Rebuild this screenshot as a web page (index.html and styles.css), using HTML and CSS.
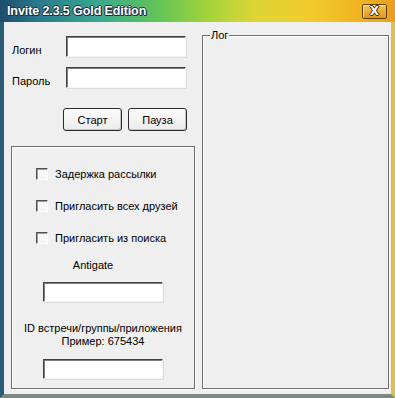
FILE: index.html
```html
<!DOCTYPE html>
<html lang="ru">
<head>
  <meta charset="UTF-8">
  <title>Invite 2.3.5 Gold Edition</title>
  <link rel="stylesheet" href="styles.css">
</head>
<body>

<div class="window">
  <div class="titlebar">
    <span class="title">Invite 2.3.5 Gold Edition</span>
    <button class="close">X</button>
  </div>

  <div class="client">
    <div class="left">
      <div class="field-row first">
        <label>Логин</label>
        <input type="text" class="edit">
      </div>
      <div class="field-row">
        <label>Пароль</label>
        <input type="password" class="edit">
      </div>

      <div class="buttons">
        <button class="btn">Старт</button>
        <button class="btn">Пауза</button>
      </div>

      <div class="group options">
        <div class="check-row"><span class="checkbox"></span>Задержка рассылки</div>
        <div class="check-row"><span class="checkbox"></span>Пригласить всех друзей</div>
        <div class="check-row"><span class="checkbox"></span>Пригласить из поиска</div>

        <div class="caption antigate">Antigate</div>
        <input type="text" class="edit small">

        <div class="caption meeting">ID встречи/группы/приложения<br>Пример: 675434</div>
        <input type="text" class="edit small">
      </div>
    </div>

    <div class="group log">
      <span class="legend">Лог</span>
    </div>
  </div>
</div>

</body>
</html>
```

FILE: styles.css
```css
body {
  margin: 0;
  font-family: 'Liberation Sans', Arial, sans-serif;
  font-size: 11px;
  color: #000;
  background: #fff;
}
.window {
  width: 395px;
  height: 398px;
  display: flex;
  flex-direction: column;
}

/* Title bar */
.titlebar {
  height: 22px;
  display: flex;
  align-items: center;
  justify-content: space-between;
  padding: 0 8px 0 7px;
  background: linear-gradient(90deg, #1d4d6e 0%, #2a7a8c 10%, #3aa98e 25%, #62c458 40%, #9fd33a 52%, #dcd536 64%, #f1cc2c 78%, #f0b222 92%, #eb9e1c 100%);
}
.title {
  color: #fff;
  font-weight: bold;
  font-size: 12.5px;
  letter-spacing: -0.1px;
  text-shadow: 1px 0 #16324a, -1px 0 #16324a, 0 1px #16324a, 0 -1px #16324a, 1px 1px #16324a;
}
.close {
  width: 25px;
  height: 15px;
  padding: 0;
  border: 1px solid #5e400e;
  border-radius: 2px;
  background: linear-gradient(#f6c25a, #e2961c);
  box-shadow: inset 1px 1px #fbe3a6;
  color: #fff;
  font-family: 'DejaVu Sans', sans-serif;
  font-weight: bold;
  font-size: 12px;
  line-height: 13px;
  text-shadow: 1px 0 #3a2a0a, -1px 0 #3a2a0a, 0 1px #3a2a0a, 0 -1px #3a2a0a;
}

/* Client area */
.client {
  flex: 1;
  display: flex;
  background: #efefef;
  border-left: 4px solid #2a5c76;
  border-right: 4px solid #e2bd48;
  border-bottom: 4px solid #7d8a84;
}
.left {
  width: 194px;
}

.edit {
  box-sizing: border-box;
  width: 120px;
  height: 21px;
  margin: 0;
  background: #fff;
  border: 1px solid;
  border-color: #404040 #f4f4f4 #f4f4f4 #404040;
  box-shadow: inset 1px 1px #808080, 1px 1px #dcdcdc;
}
.field-row {
  display: flex;
  align-items: center;
  margin-top: 10px;
  padding-left: 8px;
}
.field-row.first {
  margin-top: 14px;
}
.field-row label {
  width: 54px;
  padding-top: 7px;
}

.buttons {
  display: flex;
  gap: 6px;
  margin-top: 20px;
  padding-left: 59px;
}
.btn {
  width: 59px;
  height: 23px;
  padding: 0;
  font: inherit;
  border: 1px solid #2a2a2a;
  border-radius: 3px;
  background: linear-gradient(#fbfbfb, #ececec);
  box-shadow: inset -1px -1px #c4c4c4;
}

/* Group boxes */
.group {
  box-sizing: border-box;
  border: 1px solid #6e6e6e;
  box-shadow: inset 1px 1px #fff, 1px 1px #fff;
}
.options {
  width: 184px;
  height: 243px;
  margin: 15px 0 0 7px;
  padding-top: 20px;
}
.check-row {
  display: flex;
  align-items: center;
  gap: 7px;
  height: 13px;
  padding-left: 24px;
  margin-bottom: 19px;
}
.checkbox {
  box-sizing: border-box;
  width: 12px;
  height: 12px;
  background: #f8f8f8;
  border: 1px solid;
  border-color: #505050 #fff #fff #505050;
  box-shadow: inset 1px 1px #9a9a9a;
}
.caption {
  text-align: center;
}
.antigate {
  margin-top: -4px;
  padding-right: 20px;
}
.options .small {
  display: block;
  height: 20px;
  margin: 11px 0 0 31px;
}
.meeting {
  margin-top: 20px;
  line-height: 13px;
}

.log {
  position: relative;
  width: 187px;
  height: 354px;
  margin: 13px 0 0 4px;
}
.legend {
  position: absolute;
  top: -7px;
  left: 7px;
  padding: 0 1px;
  background: #efefef;
}
```
